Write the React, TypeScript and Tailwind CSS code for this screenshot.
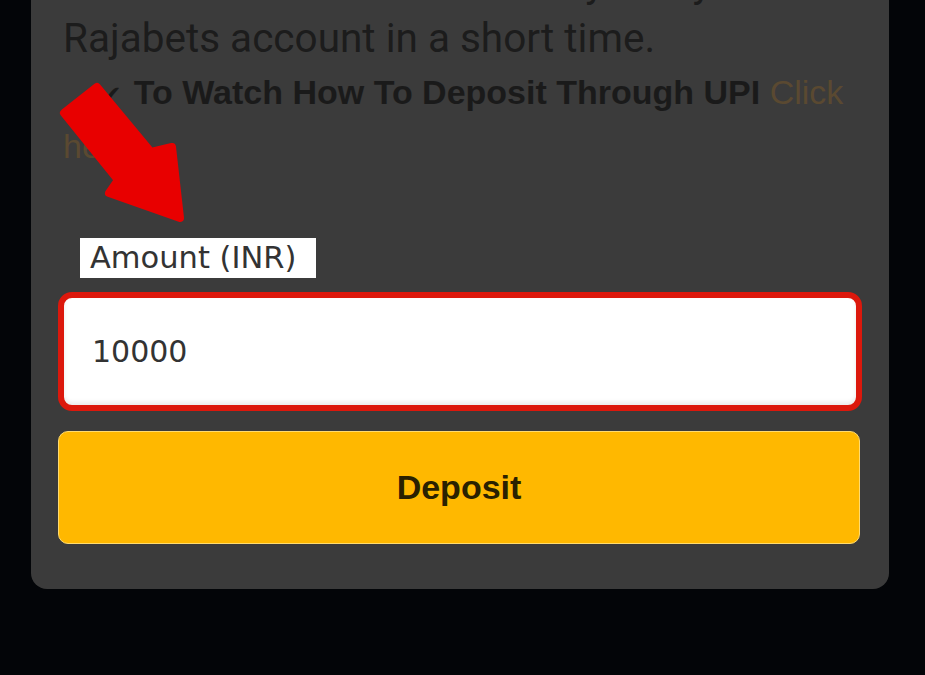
export default function App() {
  return (
    <div className="relative min-h-screen w-full overflow-hidden bg-[#030508]">
      <div className="ml-[31px] w-[858px] rounded-b-[16px] bg-[#3b3b3b] pb-[45px]">
        <div className="-mt-[42px] px-[32px] font-['Roboto',sans-serif] text-[40.5px] leading-[50px] text-[#1c1c1c]">
          <p className="mb-[5px] whitespace-nowrap pl-[420px]">money into your</p>
          <p>Rajabets account in a short time.</p>
        </div>

        <p className="mt-[4px] px-[32px] font-['Liberation_Sans',Arial,sans-serif] text-[34px] font-bold leading-[51px] text-[#1a1a1a]">
          <span className="ml-[37px] mr-[12px] font-['DejaVu_Sans',sans-serif] text-[26px]">✔</span>
          To Watch How To Deposit Through UPI{" "}
          <span className="font-normal text-[#5a4931]">Click here</span>
        </p>

        <div className="mt-[66px] px-[27px]">
          <div className="ml-[22px] flex h-[40px] w-fit items-center bg-white pl-[10px] pr-[20px] font-['DejaVu_Sans',sans-serif] text-[30.5px] text-[#333]">
            Amount (INR)
          </div>

          <div className="mt-[14px] flex h-[119px] items-center rounded-[14px] border-[6px] border-[#dc180c] bg-white pl-[28px] font-['DejaVu_Sans',sans-serif] text-[30px] text-[#333] shadow-[inset_0_-3px_4px_rgba(0,0,0,0.08)]">
            10000
          </div>

          <button className="mt-[20px] flex h-[113px] w-[802px] items-center justify-center rounded-[10px] border border-[#ffdb70] bg-[#ffb800] font-['Liberation_Sans',Arial,sans-serif] text-[34px] font-bold text-[#2a2100]">
            Deposit
          </button>
        </div>
      </div>

      <svg
        className="absolute left-0 top-0"
        width="200"
        height="240"
        viewBox="0 0 200 240"
      >
        <polygon
          points="64,113 97,87 151,152 172,147 180,218 109,193 118,180"
          fill="#e80000"
          stroke="#e80000"
          strokeWidth="8"
          strokeLinejoin="round"
        />
      </svg>
    </div>
  );
}
